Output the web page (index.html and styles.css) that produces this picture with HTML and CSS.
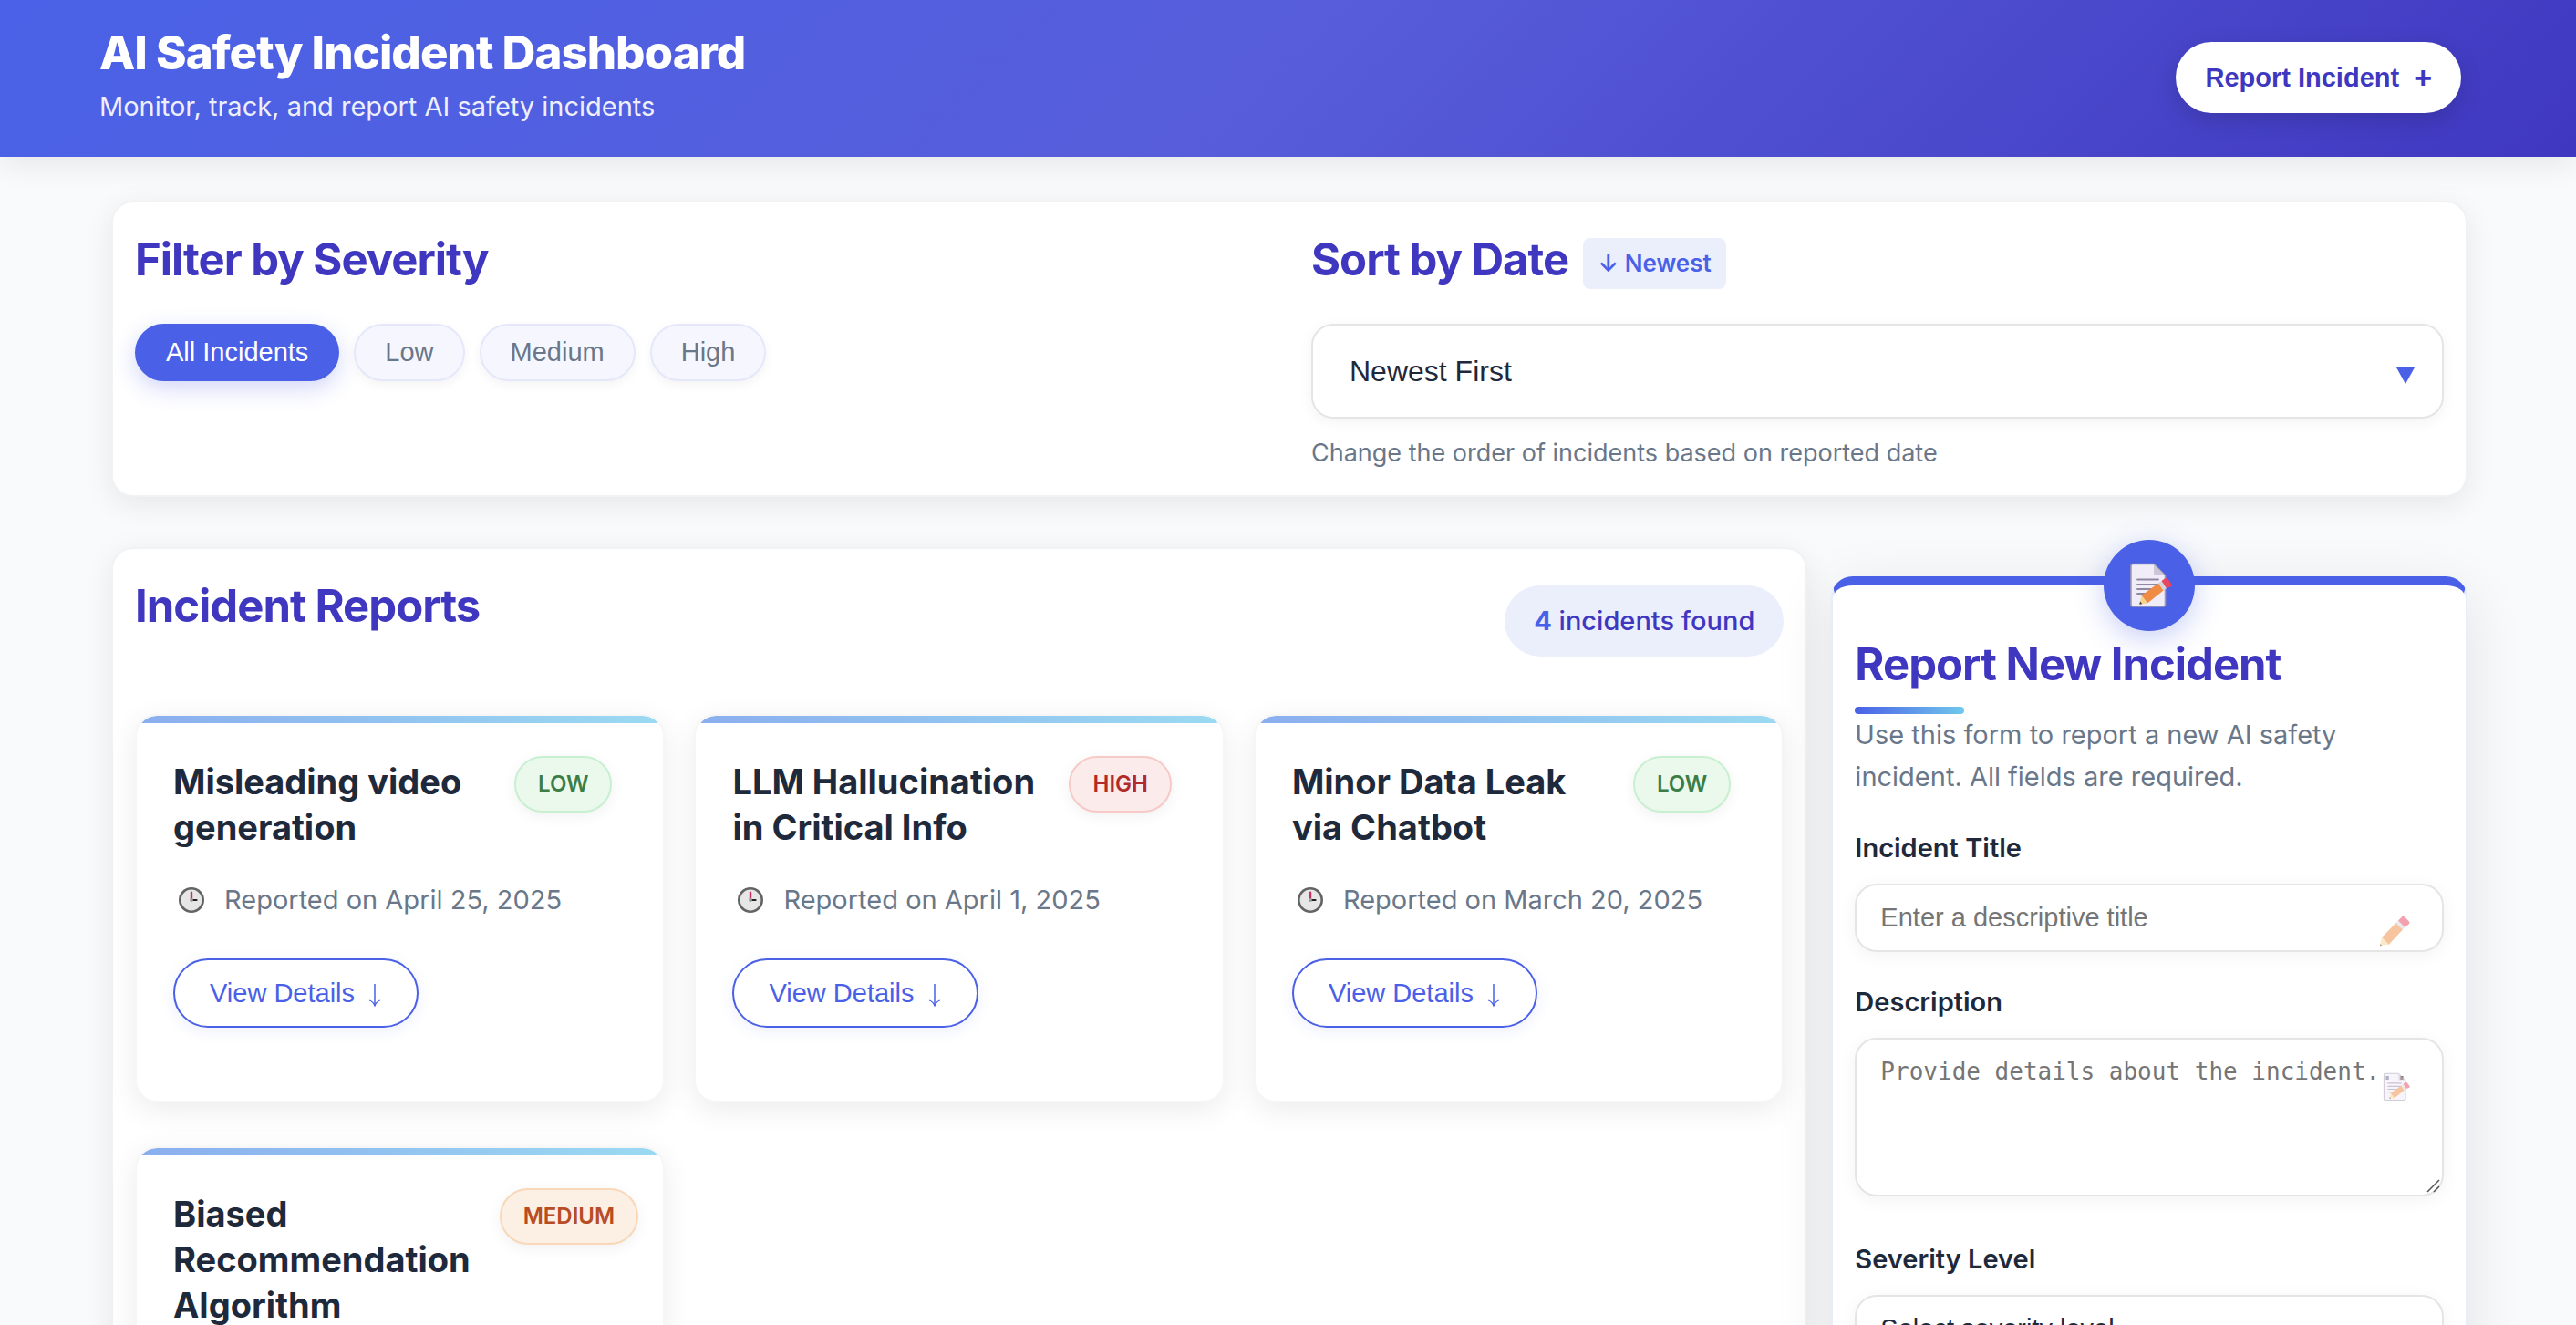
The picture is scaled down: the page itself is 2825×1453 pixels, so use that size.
FILE: index.html
```html
<!DOCTYPE html>
<html lang="en">
<head>
<meta charset="utf-8">
<meta name="viewport" content="width=device-width, initial-scale=1">
<title>AI Safety Incident Dashboard</title>
<link rel="stylesheet" href="styles.css">
</head>
<body>
<svg class="sprite" aria-hidden="true">
  <symbol id="clock" viewBox="0 0 32 32">
    <circle cx="16" cy="16" r="14" fill="#636363"/>
    <circle cx="16" cy="16" r="11.4" fill="#e6e6e6"/>
    <path d="M16 7.8V16" stroke="#ca2f5c" stroke-width="2.4" stroke-linecap="round"/>
    <path d="M16 16h5.6" stroke="#212121" stroke-width="2" stroke-linecap="round"/>
    <circle cx="16" cy="16" r="1.9" fill="#9b9b9b"/>
  </symbol>
  <symbol id="memo" viewBox="-6 0 54 50">
    <path d="M3 1.500h23L38.500 14v32a2 2 0 0 1-2 2H3a2 2 0 0 1-2-2V3.500a2 2 0 0 1 2-2z" fill="#f1edf8" stroke="#a09aae" stroke-width="1.600"/>
    <path d="M26 2v9.500a2 2 0 0 0 2 2h10z" fill="#cdc6d8"/>
    <path d="M8 18.500h23M8 24h23M8 29h18M8 34h12" stroke="#8f88a0" stroke-width="1.800" stroke-linecap="round"/>
    <path d="M12.500 36L31 22.500l5.500 8L19 44.500z" fill="#f18a43"/>
    <path d="M12.500 36L10.500 45.500 19 44.500z" fill="#f8d48a"/>
    <path d="M11 42.500l-.7 3.200 3-.4z" fill="#433b4b"/>
    <path d="M31 22.500l3.500-2.500 5.500 8-3.500 2.500z" fill="#d5d2d8"/>
    <path d="M34.500 20l3.500-2.500a2.500 2.500 0 0 1 3.500.5l4 5.500a2 2 0 0 1-.5 2.700L40 28z" fill="#e84561"/>
  </symbol>
  <symbol id="pencil" viewBox="0 0 34 34">
    <path d="M3 24L18.500 8l7.500 7.500L10.500 32z" fill="#f18a43"/>
    <path d="M3 24L1 33l9.500-1.500z" fill="#f8d48a"/>
    <path d="M1.500 31L1 33.300l2.300-.4z" fill="#433b4b"/>
    <path d="M18.500 8l2.500-2.500 7.500 7.500-2.500 2.500z" fill="#d5d2d8"/>
    <path d="M21 5.500l3.800-3.800a2.500 2.500 0 0 1 3.500 0l4.200 4.300a2.500 2.500 0 0 1 0 3.500L28.500 13z" fill="#e84561"/>
  </symbol>
  <symbol id="arrow" viewBox="0 -5 16 32">
    <path d="M8 1v24" fill="none" stroke="currentColor" stroke-width="1.500"/>
    <path d="M2 19.500c2.500.8 4.600 3 6 7 1.400-4 3.500-6.200 6-7l-.4-1C11.300 19.300 9.500 20.900 8 23c-1.500-2.100-3.300-3.700-5.600-4.500z" fill="currentColor"/>
  </symbol>
</svg>
<div class="app">
  <header class="header">
    <div>
      <h1 class="header-title">AI Safety Incident Dashboard</h1>
      <p class="header-subtitle">Monitor, track, and report AI safety incidents</p>
    </div>
    <button class="report-button" type="button">Report Incident <span class="plus">+</span></button>
  </header>

  <main class="main">
    <section class="panel controls">
      <div>
        <h2 class="heading">Filter by Severity</h2>
        <div class="filters">
          <button class="filter filter-active" type="button">All Incidents</button>
          <button class="filter" type="button">Low</button>
          <button class="filter" type="button">Medium</button>
          <button class="filter" type="button">High</button>
        </div>
      </div>
      <div>
        <h2 class="heading"><label for="sort">Sort by Date</label><span class="sort-tag">↓ Newest</span></h2>
        <div class="select-wrap">
          <select class="sort-select" id="sort"><option>Newest First</option></select>
          <svg class="caret" viewBox="0 0 20 18" aria-hidden="true"><path d="M0 0h20L10 18z" fill="currentColor"/></svg>
        </div>
        <p class="hint">Change the order of incidents based on reported date</p>
      </div>
    </section>

    <div class="columns">
      <section class="panel">
        <div class="list-header">
          <h2 class="heading">Incident Reports</h2>
          <p class="count"><strong class="count-number">4</strong> incidents found</p>
        </div>
        <div class="cards">
          <article class="card">
            <div class="card-header">
              <h3 class="card-title">Misleading video generation</h3>
              <span class="badge badge-low">LOW</span>
            </div>
            <p class="card-date"><svg class="clock" aria-hidden="true"><use href="#clock"/></svg>Reported on April 25, 2025</p>
            <button class="details" type="button">View Details<svg class="arrow" aria-hidden="true"><use href="#arrow"/></svg></button>
          </article>
          <article class="card">
            <div class="card-header">
              <h3 class="card-title">LLM Hallucination in Critical Info</h3>
              <span class="badge badge-high">HIGH</span>
            </div>
            <p class="card-date"><svg class="clock" aria-hidden="true"><use href="#clock"/></svg>Reported on April 1, 2025</p>
            <button class="details" type="button">View Details<svg class="arrow" aria-hidden="true"><use href="#arrow"/></svg></button>
          </article>
          <article class="card">
            <div class="card-header">
              <h3 class="card-title">Minor Data Leak via Chatbot</h3>
              <span class="badge badge-low">LOW</span>
            </div>
            <p class="card-date"><svg class="clock" aria-hidden="true"><use href="#clock"/></svg>Reported on March 20, 2025</p>
            <button class="details" type="button">View Details<svg class="arrow" aria-hidden="true"><use href="#arrow"/></svg></button>
          </article>
          <article class="card">
            <div class="card-header">
              <h3 class="card-title">Biased Recommendation Algorithm</h3>
              <span class="badge badge-medium">MEDIUM</span>
            </div>
          </article>
        </div>
      </section>

      <form class="form">
        <span class="form-icon"><svg class="form-memo" aria-hidden="true"><use href="#memo"/></svg></span>
        <h2 class="form-title">Report New Incident</h2>
        <p class="form-text">Use this form to report a new AI safety incident. All fields are required.</p>
        <div class="field">
          <label class="label" for="title">Incident Title</label>
          <input class="control" id="title" type="text" placeholder="Enter a descriptive title">
          <svg class="field-icon pencil" aria-hidden="true"><use href="#pencil"/></svg>
        </div>
        <div class="field field-area">
          <label class="label" for="description">Description</label>
          <textarea class="control area" id="description" placeholder="Provide details about the incident..."></textarea>
          <svg class="field-icon memo" aria-hidden="true"><use href="#memo"/></svg>
          <svg class="grip" viewBox="0 0 16 16" aria-hidden="true"><path d="M1 14L14 1M8 14l6-6" fill="none" stroke="#555" stroke-width="1.500"/></svg>
        </div>
        <div class="field">
          <label class="label" for="severity">Severity Level</label>
          <select class="control" id="severity"><option>Select severity level</option></select>
        </div>
      </form>
    </div>
  </main>
</div>
</body>
</html>
```
FILE: styles.css
```css
:root {
  --primary: #4a60e6;
  --deep: #3f37c0;
  --ink: #1e293b;
  --muted: #697789;
  --tint: #ebeffc;
  --line: #e5e5e5;
  --ui: "Liberation Sans", Arial, sans-serif;
}

* {
  box-sizing: border-box;
}

body {
  margin: 0;
  background: #f8fafc;
  color: var(--ink);
  font: 29px/46px Inter, sans-serif;
}

h1, h2, h3, p {
  margin: 0;
}

.sprite {
  position: absolute;
  width: 0;
  height: 0;
}

.app {
  height: 100vh;
  overflow: hidden;
}

.header {
  display: flex;
  justify-content: space-between;
  align-items: center;
  padding: 30px 126px 32px 109px;
  background: linear-gradient(135deg, #4a62e7, #575dda 50%, #3f37c0);
  box-shadow: 0 8px 32px rgba(0, 0, 0, 0.08);
  color: #fff;
}

.header-title {
  margin-bottom: 8px;
  font-size: 51px;
  font-weight: 800;
  line-height: 56px;
  letter-spacing: -1px;
}

.header-subtitle {
  opacity: 0.9;
}

.report-button {
  display: flex;
  align-items: center;
  gap: 16px;
  padding: 20px 32px;
  border: 0;
  border-radius: 40px;
  background: #fff;
  box-shadow: 0 8px 24px rgba(0, 0, 0, 0.15);
  color: var(--deep);
  font: bold 29px/38px var(--ui);
}

.plus {
  font-size: 34px;
}

.main {
  padding: 48px 119px 0 122px;
}

.panel {
  padding: 24px;
  border: 2px solid #f1f2f3;
  border-radius: 24px;
  background: #fff;
  box-shadow: 0 8px 32px rgba(0, 0, 0, 0.08);
}

.controls {
  display: grid;
  grid-template-columns: 1fr 1fr;
  gap: 48px;
  margin-bottom: 55px;
}

.heading {
  margin-bottom: 32px;
  color: var(--deep);
  font-size: 49px;
  font-weight: 700;
  line-height: 77px;
  letter-spacing: -1px;
}

.filters {
  display: flex;
  gap: 16px;
}

.filter {
  padding: 14px 32px;
  border: 2px solid #e5e7fb;
  border-radius: 32px;
  background: #f6f7fe;
  box-shadow: 0 4px 12px rgba(0, 0, 0, 0.05);
  color: var(--muted);
  font: 29px/31px var(--ui);
}

.filter-active {
  border-color: var(--primary);
  background: var(--primary);
  box-shadow: 0 8px 24px rgba(74, 96, 230, 0.25);
  color: #fff;
}

.sort-tag {
  display: inline-block;
  margin-left: 16px;
  padding: 8px 16px;
  border-radius: 8px;
  background: var(--tint);
  color: var(--primary);
  font-size: 26px;
  font-weight: 600;
  line-height: 40px;
  letter-spacing: 0;
  vertical-align: middle;
}

.select-wrap {
  position: relative;
}

.sort-select {
  display: block;
  width: 100%;
  padding: 32px 40px;
  border: 2px solid var(--line);
  border-radius: 24px;
  appearance: none;
  background: #fff;
  box-shadow: 0 4px 16px rgba(0, 0, 0, 0.05);
  color: var(--ink);
  font: 32px/36px var(--ui);
}

.caret {
  position: absolute;
  top: 48px;
  right: 32px;
  width: 20px;
  height: 18px;
  color: var(--primary);
  pointer-events: none;
}

.hint {
  margin-top: 16px;
  color: var(--muted);
  font-size: 27px;
  line-height: 44px;
}

.columns {
  display: grid;
  grid-template-columns: minmax(0, 8fr) minmax(0, 3fr);
  gap: 26px;
  align-items: start;
}

.list-header {
  display: flex;
  justify-content: space-between;
  align-items: center;
  margin-bottom: 48px;
}

.count {
  padding: 16px 32px;
  border-radius: 40px;
  background: var(--tint);
  color: var(--deep);
  font-weight: 500;
}

.count-number {
  color: var(--primary);
  font-weight: 700;
}

.cards {
  display: grid;
  grid-template-columns: repeat(3, minmax(0, 1fr));
  gap: 48px 32px;
}

.card {
  position: relative;
  padding: 44px 40px 80px;
  border: 2px solid #f6f6f7;
  border-radius: 24px;
  background: linear-gradient(90deg, #8aaeee, #9bdaf2) top / 100% 8px no-repeat padding-box, #fff;
  box-shadow: 0 8px 32px rgba(0, 0, 0, 0.08);
}

.card-header {
  display: flex;
  justify-content: space-between;
  align-items: flex-start;
  gap: 32px;
  margin-bottom: 32px;
  padding-right: 16px;
}

.card-title {
  padding-top: 3px;
  font-size: 38px;
  font-weight: 700;
  line-height: 50px;
}

.badge {
  flex-shrink: 0;
  padding: 9px 24px;
  border: 2px solid;
  border-radius: 32px;
  box-shadow: 0 4px 16px rgba(0, 0, 0, 0.06);
  font-size: 24px;
  font-weight: 600;
  line-height: 40px;
}

.badge-low {
  border-color: #c8f0d0;
  background: #ebf9ed;
  color: #3c7d45;
}

.badge-high {
  border-color: #f7c9c7;
  background: #fbebeb;
  color: #b02b2a;
}

.badge-medium {
  border-color: #f8d8b8;
  background: #fcefe4;
  color: #b84c23;
}

.card-date {
  display: flex;
  align-items: center;
  gap: 16px;
  margin-bottom: 41px;
  color: var(--muted);
}

.clock {
  width: 40px;
  height: 32px;
}

.details {
  display: flex;
  align-items: center;
  gap: 14px;
  padding: 19px 38px;
  border: 2px solid var(--primary);
  border-radius: 40px;
  background: #fff;
  box-shadow: 0 4px 16px rgba(74, 96, 230, 0.1);
  color: var(--primary);
  font: 29px/34px var(--ui);
}

.arrow {
  width: 16px;
  height: 32px;
}

.form {
  position: relative;
  margin-top: 32px;
  padding: 48px 24px;
  border: 2px solid #e8edfd;
  border-top: 10px solid var(--primary);
  border-radius: 24px;
  background: #fff;
  box-shadow: 0 16px 64px rgba(0, 0, 0, 0.1);
}

.form-icon {
  position: absolute;
  top: -50px;
  left: calc(50% - 50px);
  display: flex;
  justify-content: center;
  align-items: center;
  width: 100px;
  height: 100px;
  border-radius: 50%;
  background: var(--primary);
  box-shadow: 0 8px 32px rgba(74, 96, 230, 0.3);
}

.form-memo {
  width: 54px;
  height: 50px;
}

.form-title {
  position: relative;
  padding-bottom: 16px;
  color: var(--deep);
  font-size: 49px;
  font-weight: 700;
  line-height: 77px;
  letter-spacing: -1px;
}

.form-title::after {
  content: "";
  position: absolute;
  bottom: 0;
  left: 0;
  width: 120px;
  height: 8px;
  border-radius: 4px;
  background: linear-gradient(90deg, var(--primary), #70c8ec);
}

.form-text {
  margin-bottom: 32px;
  color: var(--muted);
}

.field {
  position: relative;
  margin-bottom: 32px;
}

.field-area {
  margin-bottom: 46px;
}

.label {
  display: block;
  margin-bottom: 16px;
  font-weight: 600;
}

.control {
  display: block;
  width: 100%;
  padding: 18px 26px;
  border: 2px solid var(--line);
  border-radius: 24px;
  appearance: none;
  background: #fff;
  box-shadow: 0 4px 20px rgba(0, 0, 0, 0.05);
  color: var(--ink);
  font: 29px/35px var(--ui);
}

.control::placeholder {
  color: #757575;
}

.area {
  height: 174px;
  font: 26px/35px "DejaVu Sans Mono", monospace;
}

.area::-webkit-resizer {
  display: none;
}

.field-icon {
  position: absolute;
  opacity: 0.5;
  pointer-events: none;
}

.pencil {
  right: 37px;
  bottom: 6px;
  width: 34px;
  height: 34px;
}

.memo {
  top: 100px;
  right: 36px;
  width: 34px;
  height: 32px;
}

.grip {
  position: absolute;
  right: 3px;
  bottom: 3px;
  width: 16px;
  height: 16px;
  pointer-events: none;
}
```
